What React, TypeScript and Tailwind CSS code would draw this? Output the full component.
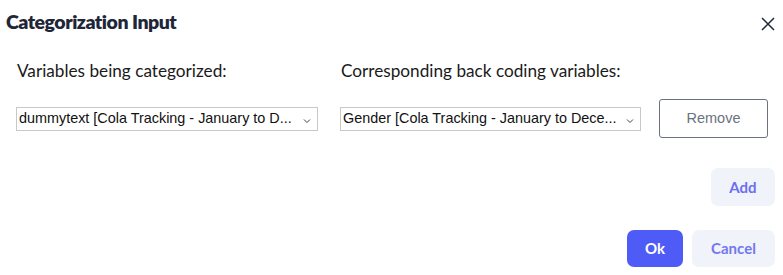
import React from "react";

function Chevron() {
  return (
    <svg width="8" height="6" viewBox="0 0 8 6" fill="none" className="shrink-0 mt-[4px]">
      <path d="M1 1.5 L4 4.5 L7 1.5" stroke="#444" strokeWidth="1" />
    </svg>
  );
}

function FakeSelect({ text, width }: { text: string; width: string }) {
  return (
    <div
      className={`flex items-center h-[24px] border border-[#c8c8c8] bg-white pl-[2px] pr-[6px] ${width}`}
      style={{ fontFamily: '"Liberation Sans", Arial, sans-serif' }}
    >
      <span className="flex-1 whitespace-nowrap overflow-hidden text-[14.4px] text-[#111] leading-none">{text}</span>
      <Chevron />
    </div>
  );
}

export default function App() {
  return (
    <div
      className="w-[783px] h-[275px] bg-white relative overflow-hidden"
      style={{ fontFamily: 'Lato, "Noto Sans", sans-serif' }}
    >
      <div className="flex items-start justify-between pl-[6px] pr-[8px] pt-[8px]">
        <h1 className="text-[19.5px] font-extrabold text-[#1e2638] leading-[28px] tracking-[-0.5px]">Categorization Input</h1>
        <button className="mt-[9px] mr-[0px]">
          <svg width="14" height="14" viewBox="0 0 14 14">
            <path d="M1 1 L13 13 M13 1 L1 13" stroke="#1e2638" strokeWidth="1.5" />
          </svg>
        </button>
      </div>

      <div className="flex pl-[16px] mt-[25px]">
        <div className="w-[324px] flex flex-col">
          <div className="text-[17.2px] text-[#1a1a1a] leading-[20px] pl-[1px]">Variables being categorized:</div>
        </div>
        <div className="flex flex-col">
          <div className="text-[17.2px] text-[#1a1a1a] leading-[20px] pl-[1px]">Corresponding back coding variables:</div>
        </div>
      </div>

      <div className="flex items-center pl-[16px] mt-[18px]">
        <FakeSelect text="dummytext [Cola Tracking - January to D..." width="w-[302px]" />
        <div className="w-[22px]" />
        <FakeSelect text="Gender [Cola Tracking - January to Dece..." width="w-[301px]" />
        <div className="w-[18px]" />
        <button
          className="w-[109px] h-[39px] border border-[#6b7280] rounded-[3px] text-[14.5px] text-[#6b7280] bg-white"
          style={{ fontFamily: '"Liberation Sans", Arial, sans-serif' }}
        >
          Remove
        </button>
      </div>

      <div className="flex justify-end pr-[8px] mt-[30px]">
        <button className="w-[64px] h-[38px] rounded-[7px] bg-[#f0f3f9] text-[#6b6ff0] text-[15px] font-bold">
          Add
        </button>
      </div>

      <div className="flex justify-end gap-[9px] pr-[8px] mt-[24px]">
        <button className="w-[56px] h-[37px] rounded-[7px] bg-[#4f5bf6] text-white text-[15px] font-bold">Ok</button>
        <button className="w-[83px] h-[37px] rounded-[7px] bg-[#f0f3f9] text-[#7378ee] text-[15px] font-bold">Cancel</button>
      </div>
    </div>
  );
}
